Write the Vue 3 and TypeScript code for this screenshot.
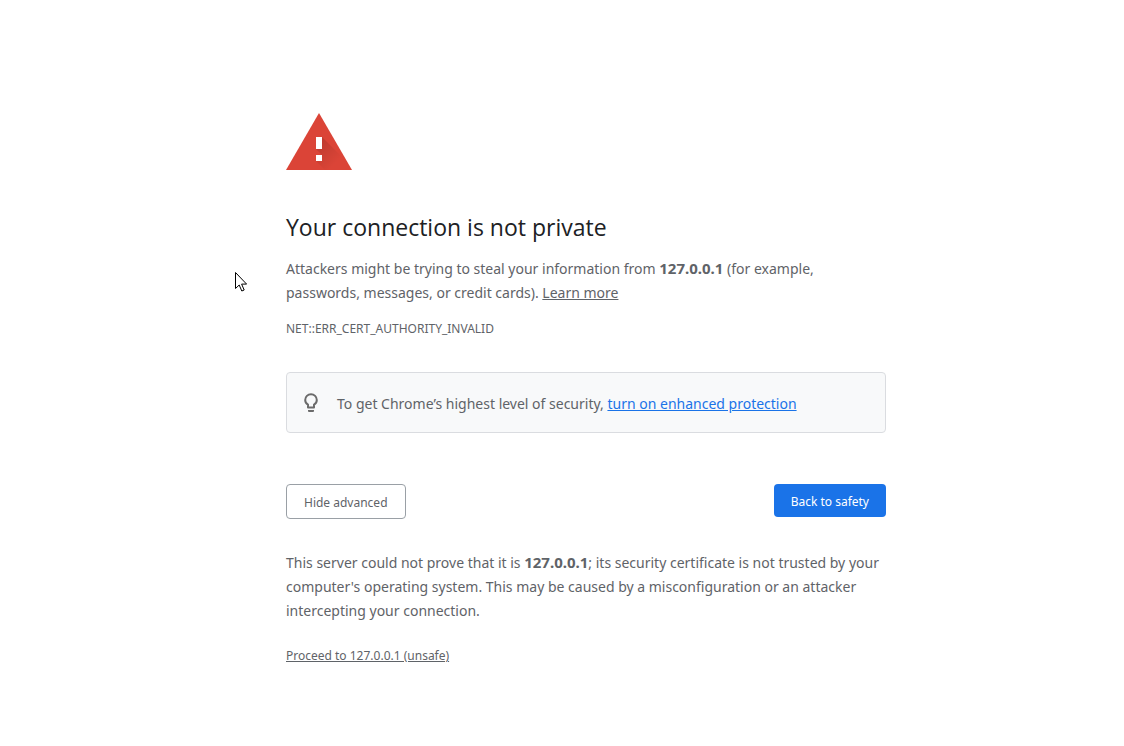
<script setup lang="ts">
import { ref } from 'vue'

const host = '127.0.0.1'
const advanced = ref<boolean>(true)
</script>

<template>
  <main class="page">
    <div class="content">
      <svg class="warning" viewBox="0 0 66 57" aria-hidden="true">
        <defs>
          <linearGradient id="shade" gradientUnits="userSpaceOnUse" x1="32" y1="28" x2="52" y2="48">
            <stop offset="0" stop-color="#000" stop-opacity=".14" />
            <stop offset="1" stop-color="#000" stop-opacity="0" />
          </linearGradient>
        </defs>
        <path d="M33 0 66 57H0Z" fill="#db4437" />
        <path d="M36 24 62 50 66 57H39L30 48 36 42 30 36Z" fill="url(#shade)" />
        <path d="M30 24h6v12h-6zM30 42h6v6h-6z" fill="#fff" />
      </svg>
      <h1>Your connection is not private</h1>
      <p>
        Attackers might be trying to steal your information from <strong>{{ host }}</strong> (for example,
        passwords, messages, or credit cards). <a class="plain" href="#">Learn more</a>
      </p>
      <p class="code">NET::ERR_CERT_AUTHORITY_INVALID</p>
      <section class="tip">
        <svg class="bulb" viewBox="0 0 22 22" aria-hidden="true">
          <path d="M8 15.500v-2.800C6.200 11.700 5.200 10 5.200 8a5.800 5.800 0 0 1 11.600 0c0 2-1 3.700-2.800 4.700v2.800z" fill="none" stroke="#6b6b6b" stroke-width="2" stroke-linejoin="round" />
          <path d="M8 18h6v1q0 1-1 1H9q-1 0-1-1z" fill="#6b6b6b" />
        </svg>
        <p>To get Chrome’s highest level of security, <a href="#">turn on enhanced protection</a></p>
      </section>
      <div class="actions">
        <button class="secondary" type="button" @click="advanced = !advanced">
          {{ advanced ? 'Hide advanced' : 'Advanced' }}
        </button>
        <button class="primary" type="button">Back to safety</button>
      </div>
      <section v-if="advanced" class="details">
        <p>
          This server could not prove that it is <strong>{{ host }}</strong>; its security certificate is not trusted by your
          computer's operating system. This may be caused by a misconfiguration or an attacker
          intercepting your connection.
        </p>
        <a class="plain proceed" href="#">Proceed to {{ host }} (unsafe)</a>
      </section>
    </div>
    <svg class="pointer" viewBox="0 0 12 20" aria-hidden="true">
      <path d="M.5.5v16l3.700-3.500 2.600 6 2.400-1-2.600-5.900h5z" fill="#fff" stroke="#000" />
    </svg>
  </main>
</template>

<style>
body {
  margin: 0;
  background: #fff;
}
</style>

<style scoped>
.page {
  padding: 113px 0 64px 48px;
  color: #5f6368;
  font-family: "Noto Sans", "Open Sans", sans-serif;
  font-size: 14px;
  line-height: 24px;
}
.content {
  max-width: 600px;
  margin: 0 auto;
}
.warning {
  display: block;
  width: 66px;
  height: 57px;
}
h1 {
  margin: 43px 0 16px;
  color: #202124;
  font-family: "Open Sans", "Noto Sans", sans-serif;
  font-size: 23px;
  font-weight: 400;
  line-height: 28px;
}
p {
  margin: 0;
}
strong {
  font-size: 15px;
  line-height: 20px;
}
.plain {
  color: inherit;
}
.code {
  margin-top: 14px;
  font-size: 12px;
  line-height: 20px;
}
.tip {
  display: flex;
  align-items: flex-start;
  gap: 15px;
  margin-top: 33px;
  padding: 19px 13px 16px;
  border: 1px solid #dadce0;
  border-radius: 4px;
  background: #f8f9fa;
}
.tip a {
  color: #1a73e8;
}
.bulb {
  flex: none;
  width: 22px;
  height: 22px;
}
.actions {
  display: flex;
  justify-content: space-between;
  align-items: flex-start;
  margin-top: 51px;
}
button {
  padding: 9px 17px 7px;
  border: 0;
  border-radius: 4px;
  font: inherit;
  font-size: 12px;
  line-height: 17px;
}
.secondary {
  border: 1px solid #9aa0a6;
  background: #fff;
  color: #5f6368;
}
.primary {
  background: #1a73e8;
  color: #fff;
}
.details {
  margin-top: 32px;
}
.proceed {
  display: inline-block;
  margin-top: 21px;
  font-size: 12px;
}
.pointer {
  position: absolute;
  top: 272px;
  left: 235px;
  width: 12px;
  height: 20px;
}
</style>
